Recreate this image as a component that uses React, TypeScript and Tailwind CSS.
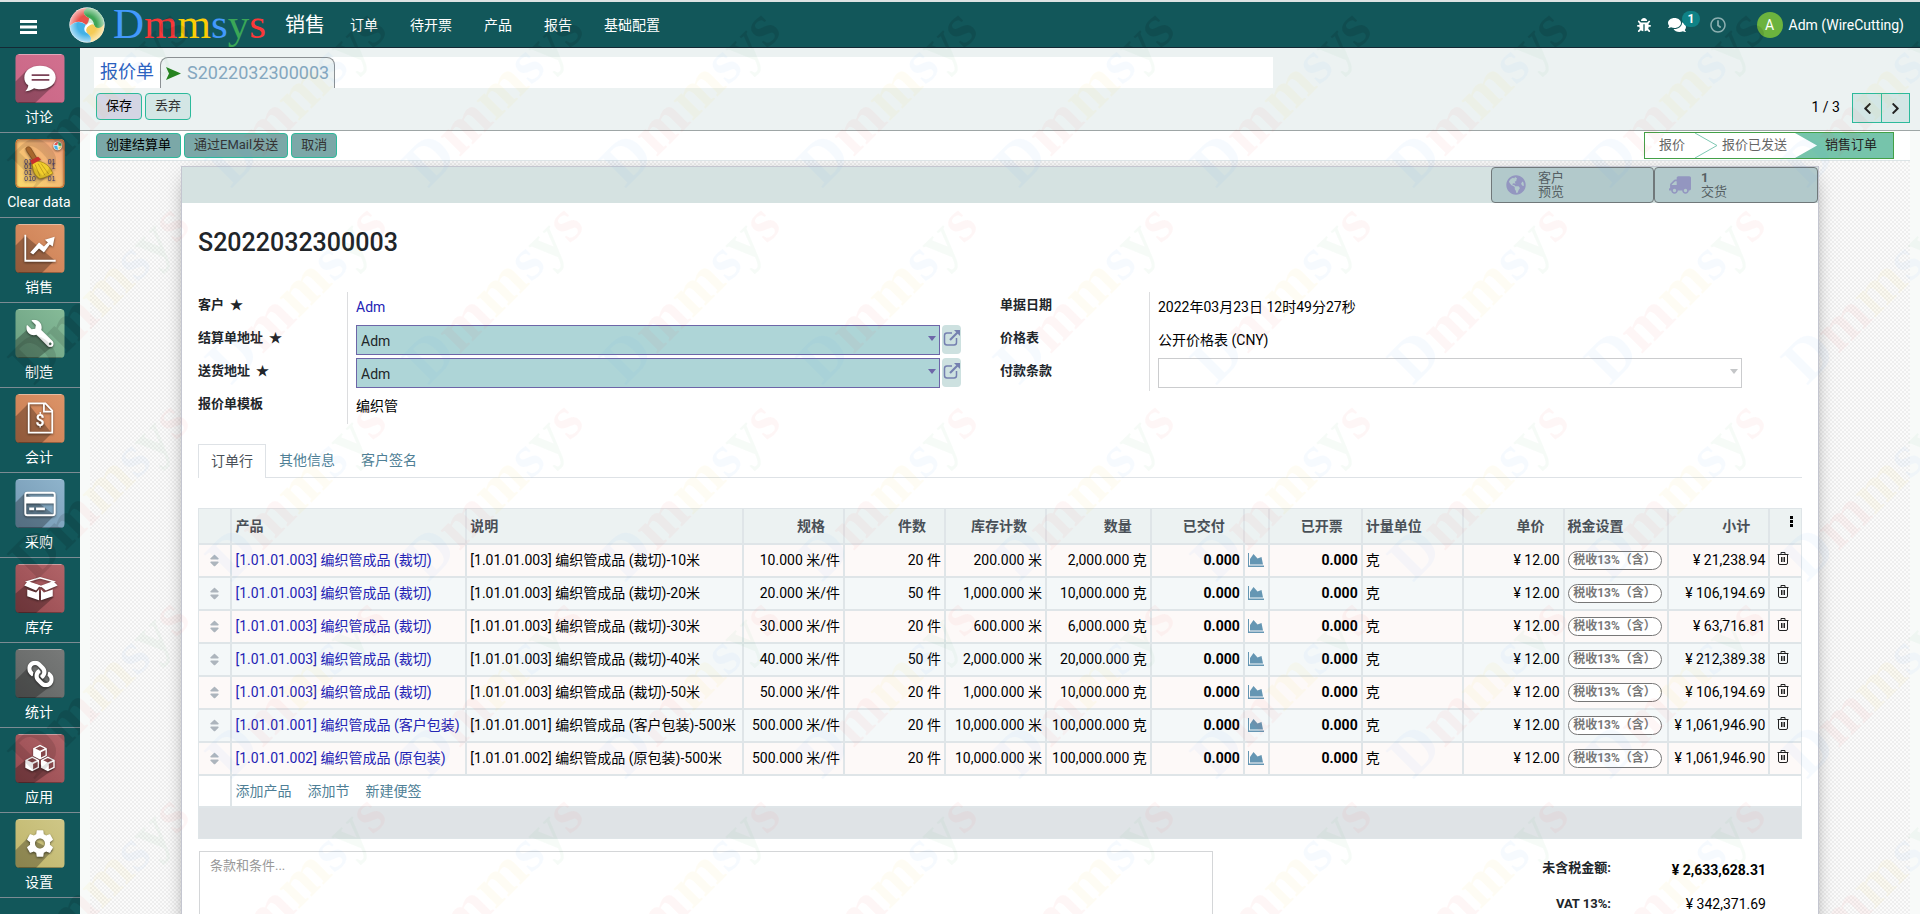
import type { ReactNode } from 'react';
import { FaBug, FaChevronLeft, FaChevronRight, FaComments, FaGlobeAmericas, FaLink, FaRegClock, FaSort, FaTruck, FaWrench } from 'react-icons/fa';
import { MdSettings } from 'react-icons/md';

const brandLetters = [
  { char: 'D', color: '#4399fd' },
  { char: 'm', color: '#fb3838' },
  { char: 'm', color: '#fccd05' },
  { char: 's', color: '#4399fd' },
  { char: 'y', color: '#3aa757' },
  { char: 's', color: '#fb3838' },
];

const menus = ['订单', '待开票', '产品', '报告', '基础配置'];

const orderLines = [
  { code: '1.01.01.003', kind: '裁切', length: '10', spec: '10.000', pieces: 20, stock: '200.000', qty: '2,000.000', subtotal: '21,238.94' },
  { code: '1.01.01.003', kind: '裁切', length: '20', spec: '20.000', pieces: 50, stock: '1,000.000', qty: '10,000.000', subtotal: '106,194.69' },
  { code: '1.01.01.003', kind: '裁切', length: '30', spec: '30.000', pieces: 20, stock: '600.000', qty: '6,000.000', subtotal: '63,716.81' },
  { code: '1.01.01.003', kind: '裁切', length: '40', spec: '40.000', pieces: 50, stock: '2,000.000', qty: '20,000.000', subtotal: '212,389.38' },
  { code: '1.01.01.003', kind: '裁切', length: '50', spec: '50.000', pieces: 20, stock: '1,000.000', qty: '10,000.000', subtotal: '106,194.69' },
  { code: '1.01.01.001', kind: '客户包装', length: '500', spec: '500.000', pieces: 20, stock: '10,000.000', qty: '100,000.000', subtotal: '1,061,946.90' },
  { code: '1.01.01.002', kind: '原包装', length: '500', spec: '500.000', pieces: 20, stock: '10,000.000', qty: '100,000.000', subtotal: '1,061,946.90' },
];

const columns = [
  { label: '', width: 33 },
  { label: '产品', width: 235 },
  { label: '说明', width: 277 },
  { label: '规格', width: 101, numeric: true },
  { label: '件数', width: 101, numeric: true },
  { label: '库存计数', width: 101, numeric: true },
  { label: '数量', width: 105, numeric: true },
  { label: '已交付', width: 93, numeric: true },
  { label: '', width: 25 },
  { label: '已开票', width: 93, numeric: true },
  { label: '计量单位', width: 101 },
  { label: '单价', width: 101, numeric: true },
  { label: '税金设置', width: 105 },
  { label: '小计', width: 101, numeric: true },
];

const tableWidth = 1604;

function Watermark({ id, dark = false }: { id: string; dark?: boolean }) {
  return (
    <svg
      aria-hidden="true"
      className={`pointer-events-none absolute inset-0 h-full w-full select-none ${dark ? 'opacity-10' : 'opacity-[0.04]'}`}
    >
      <defs>
        <pattern id={id} width="197" height="197" patternUnits="userSpaceOnUse">
          <text transform="translate(34 189) rotate(-45)" fontFamily="Liberation Serif, serif" fontWeight="bold" fontSize="61">
            {brandLetters.map((letter, i) => (
              <tspan key={i} fill={dark ? '#000' : letter.color}>
                {letter.char}
              </tspan>
            ))}
          </text>
        </pattern>
      </defs>
      <rect width="100%" height="100%" fill={`url(#${id})`} />
    </svg>
  );
}

function BrandMark() {
  return (
    <svg viewBox="0 0 36 36" className="size-9">
      <defs>
        <radialGradient id="brand-shade" cx="0.5" cy="0.5" r="0.5">
          <stop offset="0.55" stopColor="#fff" stopOpacity="0" />
          <stop offset="1" stopColor="#fff" stopOpacity="0.6" />
        </radialGradient>
      </defs>
      <circle cx="18" cy="18" r="17.5" fill="#fff" />
      <path d="M1 19C0 9 8 0 19 1c-6 3-5 7 1 10 1 3 0 6-3 7-5-5-11-4-16 1z" fill="#e8524b" />
      <path d="M18 1c10-1 18 8 17 18-3 5-8 4-10-1-2-3-5-3-8 0 3-3 3-5 3-7-6-3-7-7-2-10z" fill="#3fa557" />
      <path d="M35 17c1 10-6 18-16 18 4-3 3-6-1-9-2-3-1-6 3-8 2-1 3-1 4 0 2 4 7 4 10-1z" fill="#f5cb57" />
      <path d="M21 35C10 36 1 29 1 19c5-5 11-5 16-1-2 3-1 6 1 8 4 3 5 6 3 9z" fill="#43b1e6" />
      <path d="M20 11c3 1 5 4 5 7-2-2-3-1-4 0-3 2-5 4-3 8-3-1-4-5-1-8 2-2 3-4 3-7z" fill="#fff" opacity="0.8" />
      <circle cx="18" cy="18" r="17.5" fill="url(#brand-shade)" />
    </svg>
  );
}

function AppTile({ id, from, to, shadow, children }: { id: string; from: string; to: string; shadow?: string; children: ReactNode }) {
  return (
    <svg viewBox="0 0 50 50" className="size-[50px] rounded">
      <defs>
        <linearGradient id={id} x1="1" y1="0" x2="0" y2="1">
          <stop offset="0" stopColor={from} />
          <stop offset="1" stopColor={to} />
        </linearGradient>
      </defs>
      <rect width="50" height="50" rx="4" fill={`url(#${id})`} />
      {shadow && <path d={shadow} fill="#000" opacity="0.27" />}
      <path d="M3 .5h44" stroke="#fff" opacity="0.4" />
      <path d="M3 49.5h44" stroke="#000" opacity="0.3" />
      <g className="drop-shadow-[0_1px_1px_rgba(0,0,0,0.55)]">{children}</g>
    </svg>
  );
}

function Cube({ x, y }: { x: number; y: number }) {
  return (
    <g transform={`translate(${x} ${y})`}>
      <path d="M0 3.5 7 0l7 3.5v8L7 15 0 11.5z" fill="#fff" />
      <path d="M2.2 3.8 7 1.6l4.8 2.2L7 6z" fill="#86484b" />
      <path d="M8 7.6l4.6-2.2v5.2L8 13z" fill="#86484b" />
    </g>
  );
}

const apps = [
  {
    name: '讨论',
    icon: (
      <AppTile id="tile-talk" from="#d2708f" to="#c96685" shadow="M11 17 0 28v22h20l20-19z">
        <path d="M25 12c9 0 16 5 16 12s-7 12-16 12c-2 0-4 0-6-1-3 2-6 3-9 3 2-2 3-4 3-6-3-2-4-5-4-8 0-7 7-12 16-12z" fill="#fff" />
        <path d="M16.500 21.500h18M16.500 26.500h18" stroke="#7b4257" strokeWidth="1.800" />
      </AppTile>
    ),
  },
  {
    name: 'Clear data',
    icon: (
      <AppTile id="tile-clear" from="#ef9c7c" to="#fbdc6c">
        <rect x=".5" y=".5" width="49" height="49" rx="4" fill="none" stroke="#c96b2c" />
        <g fill="#3b3570" fontFamily="Liberation Sans, sans-serif" fontSize="7">
          <text x="9" y="25">01</text>
          <text x="33" y="25">01</text>
          <text x="9" y="31">01</text>
          <text x="37" y="31">1</text>
          <text x="9" y="37">01</text>
          <text x="9" y="43">010</text>
          <text x="33" y="43">01</text>
        </g>
        <path d="M11 9c2-2 4-1 5 1l6 10-4 2-6-9c-1-2-2-3-1-4z" fill="#a8672c" stroke="#6f3f14" strokeWidth=".6" />
        <path d="M17 22c8 1 16 1 21 13-5 3-11 6-14 5-6-4-7-11-7-18z" fill="#f2cf2c" stroke="#a58312" strokeWidth=".7" />
        <path d="m20 26 5 12M23 25l7 12M26 25l8 11" stroke="#b8951a" strokeWidth=".8" />
        <path d="m15 22 8-4 3 3-9 5z" fill="#c8302c" />
        <circle cx="43" cy="7" r="4.500" fill="#e9f1f3" />
        <path d="M39.500 6a4 4 0 0 1 4-3l-1 3z" fill="#e8524b" />
        <path d="M43.500 3a4 4 0 0 1 3.500 4h-3z" fill="#3fa557" />
        <path d="M39.500 7a4 4 0 0 0 4 4l-1-4z" fill="#43b1e6" />
        <path d="M47 7.500a4 4 0 0 1-3 3.500v-3z" fill="#f5cb57" />
      </AppTile>
    ),
  },
  {
    name: '销售',
    icon: (
      <AppTile id="tile-sales" from="#dc9468" to="#c97c51" shadow="M10 12 0 22v28h27l13-13z">
        <path d="M10 11v26.500h31" fill="none" stroke="#fff" strokeWidth="1.800" />
        <path d="m15 29 9-10 5 4 4-4-3-3 10-3-2 10-3-2-6 8-5-4-6 6z" fill="#fff" />
      </AppTile>
    ),
  },
  {
    name: '制造',
    icon: (
      <AppTile id="tile-make" from="#86bb98" to="#6a9e80" shadow="M12 21 0 32v18h23l15-12z">
        <g transform="translate(50 0) scale(-1 1)">
          <FaWrench x={11} y={11} size={28} color="#fff" />
        </g>
      </AppTile>
    ),
  },
  {
    name: '会计',
    icon: (
      <AppTile id="tile-account" from="#dc9468" to="#c97c51" shadow="M13 10 0 23v27h27l10-10z">
        <path d="M13.500 9.500h17l7 7.500v22.500h-24z" fill="none" stroke="#fff" strokeWidth="1.800" />
        <path d="M29 9.500V18h8.500" fill="none" stroke="#fff" strokeWidth="1.800" />
        <text x="25" y="33" textAnchor="middle" fontFamily="Roboto, sans-serif" fontWeight="bold" fontSize="16" fill="#fff">
          $
        </text>
      </AppTile>
    ),
  },
  {
    name: '采购',
    icon: (
      <AppTile id="tile-buy" from="#8fb4cc" to="#7397b2" shadow="M10 14 0 24v26h27l13-13z">
        <rect x="10" y="14" width="30" height="23" rx="2" fill="none" stroke="#fff" strokeWidth="2" />
        <path d="M10 18h30v7H10zM14 29h5v3h-5zM21 29h9v3h-9z" fill="#fff" />
      </AppTile>
    ),
  },
  {
    name: '库存',
    icon: (
      <AppTile id="tile-stock" from="#b16468" to="#96494f" shadow="M11 21 0 30v20h21l18-16z">
        <path d="m12 18 13-4 14 4-13 5z" fill="none" stroke="#fff" strokeWidth="1.500" />
        <path d="m12 18 13 4-4 5-12-5zM39 18l4 4-12 5-5-4zM12 26l9 3 3-3v11l-12-4zM38 26l-9 3-3-3v11l12-4z" fill="#fff" />
      </AppTile>
    ),
  },
  {
    name: '统计',
    icon: (
      <AppTile id="tile-stats" from="#787a79" to="#626463" shadow="M13 19 0 32v18h20l17-13z">
        <g transform="translate(50 0) scale(-1 1)">
          <FaLink x={11} y={12} size={27} color="#fff" />
        </g>
      </AppTile>
    ),
  },
  {
    name: '应用',
    icon: (
      <AppTile id="tile-apps" from="#b16468" to="#96494f" shadow="M11 26 0 35v15h19l20-14z">
        <Cube x={18} y={11} />
        <Cube x={10} y={23} />
        <Cube x={26} y={23} />
      </AppTile>
    ),
  },
  {
    name: '设置',
    icon: (
      <AppTile id="tile-settings" from="#cfc787" to="#bfb56a" shadow="M13 19 0 32v18h21l17-18z">
        <MdSettings x={8} y={8} size={34} color="#fff" />
      </AppTile>
    ),
  },
];

function ExternalLinkIcon() {
  return (
    <svg viewBox="0 0 18 18" className="size-[18px]" fill="none" stroke="#7580b0">
      <path d="M9 4H4a2.500 2.500 0 0 0-2.500 2.500v7A2.500 2.500 0 0 0 4 16h7a2.500 2.500 0 0 0 2.500-2.500V9" strokeWidth="1.500" />
      <path d="m7 11 8-8" strokeWidth="2.200" />
      <path d="M11 1h6v6z" fill="#7580b0" stroke="none" />
    </svg>
  );
}

function AreaChartIcon() {
  return (
    <svg viewBox="0 0 16 14" className="h-3.5 w-4" fill="#6596b3">
      <path d="M0 0h1v12.500h15v1.500H0z" />
      <path d="M2 11.500V6l3.500-5 4 4.500L13.500 4l1.500 7.500z" />
    </svg>
  );
}

function TrashIcon() {
  return (
    <svg viewBox="0 0 12 13" className="h-[13px] w-3" fill="none" stroke="#222">
      <path d="M.5 2.500h11M4 2.500v-2h4v2M1.500 2.500V11q0 1.500 1.500 1.500h6q1.500 0 1.500-1.500V2.500M4.500 5v5M6 5v5M7.500 5v5" />
    </svg>
  );
}

function Field({ id, label, required = false, children }: { id?: string; label: string; required?: boolean; children: ReactNode }) {
  return (
    <div className="flex h-[33px]">
      <label htmlFor={id} className="w-[149px] shrink-0 text-[13px] leading-[26px] font-bold text-[#212529]">
        {label}
        {required && <span className="ml-1.5">★</span>}
      </label>
      <div className="flex h-full flex-1 border-l border-[#dcdddf] pl-2 leading-[30px]">{children}</div>
    </div>
  );
}

function PartnerSelect({ id, label }: { id: string; label: string }) {
  return (
    <div className="flex flex-1 gap-0.5">
      <div className="relative h-[30px] w-[584px]">
        <select id={id} className="block h-full w-full appearance-none border border-[#6d66a8] bg-[#aed5d7] px-1 pb-0.5 text-[#212529]">
          <option>Adm</option>
        </select>
        <span className="pointer-events-none absolute top-[11px] right-1 border-x-4 border-t-[5px] border-x-transparent border-t-[#6d66a8]" />
      </div>
      <button aria-label={`打开${label}`} className="flex h-[29px] w-[19px] items-start justify-center rounded bg-[#cde1e0] pt-1">
        <ExternalLinkIcon />
      </button>
    </div>
  );
}

function Header() {
  return (
    <header className="relative z-10 flex h-12 shrink-0 items-center border-t-2 border-b border-t-[#dde3e3] border-b-[#142a35] bg-[#12575a] pr-4 pl-5 text-white">
      <button aria-label="菜单">
        <svg viewBox="0 0 17 14" className="mt-1 h-3.5 w-[17px]" fill="#fff">
          <path d="M0 0h17v3H0zM0 5.500h17v3H0zM0 11h17v3H0z" />
        </svg>
      </button>
      <a href="#" className="ml-8 flex items-center gap-2">
        <BrandMark />
        <span className="-mt-0.5 font-['Liberation_Serif',serif] text-[43px] leading-[44px]">
          {brandLetters.map((letter, i) => (
            <span key={i} style={{ color: letter.color }}>
              {letter.char}
            </span>
          ))}
        </span>
      </a>
      <a href="#" className="ml-[19px] text-xl">
        销售
      </a>
      <nav className="ml-[25px] flex gap-8">
        {menus.map((menu) => (
          <a key={menu} href="#">
            {menu}
          </a>
        ))}
      </nav>
      <div className="ml-auto flex items-center">
        <button aria-label="调试">
          <FaBug size={14} />
        </button>
        <button aria-label="消息" className="relative ml-[17px]">
          <FaComments size={18} />
          <span className="absolute -top-[5px] left-3.5 rounded-full bg-[#0f8286] px-1.5 text-xs leading-4 font-bold">1</span>
        </button>
        <button aria-label="活动" className="ml-6 text-[#8db0b1]">
          <FaRegClock size={16} />
        </button>
        <button className="ml-[31px] flex items-center gap-1.5">
          <span className="flex size-[26px] items-center justify-center rounded-full bg-[#6cb33e]">A</span>
          Adm (WireCutting)
        </button>
      </div>
      <Watermark id="mark-header" dark />
    </header>
  );
}

function Sidebar() {
  return (
    <aside className="relative z-10 w-20 shrink-0 overflow-hidden bg-[#12575a] text-white">
      {apps.map((app) => (
        <a key={app.name} href="#" className="flex h-[85px] flex-col items-center border-b border-[#7c8b93] pt-1.5">
          {app.icon}
          <span className="pr-0.5 leading-[29px] whitespace-nowrap">{app.name}</span>
        </a>
      ))}
      {/* shifted up by the header so that the tiles line up with the page */}
      <div className="pointer-events-none absolute inset-x-0 -top-12 bottom-0">
        <Watermark id="mark-side" dark />
      </div>
    </aside>
  );
}

function ControlPanel() {
  const pagerButton = 'flex h-[30px] items-center justify-center border border-[#2cba9b] bg-[#d3e6e5] text-[#222]';

  return (
    <div className="h-[83px] shrink-0 border-b border-[#9ea6a6] bg-[#ecf2f2] pt-[9px] pr-2.5 pl-3.5">
      <nav className="flex h-[31px] w-[1179px] bg-white text-lg leading-[29px]">
        <a href="#" className="px-1.5 text-[#2b61bf]">
          报价单
        </a>
        <span className="flex gap-1.5 rounded-t-lg border border-b-0 border-[#8b9093] bg-[#ecf2f2] px-[5px] text-[#84a7bf]">
          <svg viewBox="0 0 15 13" className="h-[13px] w-[15px] self-center" fill="#26831f">
            <path d="m0 0 15 6.500L0 13l3-6.500z" />
          </svg>
          S2022032300003
        </span>
      </nav>
      <div className="flex justify-between pt-[5px] pl-0.5">
        <div className="flex gap-[3px] text-[13px]">
          <button className="h-[27px] rounded border border-[#2cba9b] bg-[#d4d5e4] px-[9px] text-black">保存</button>
          <button className="h-[27px] rounded border border-[#2cba9b] bg-[#d3e6e5] px-[9px] text-[#333]">丢弃</button>
        </div>
        <div className="flex">
          <span className="mr-3 leading-7">1 / 3</span>
          <button aria-label="上一个" className={`${pagerButton} w-[30px]`}>
            <FaChevronLeft size={13} />
          </button>
          <button aria-label="下一个" className={`${pagerButton} w-7 border-l-0`}>
            <FaChevronRight size={13} />
          </button>
        </div>
      </div>
    </div>
  );
}

function StatusBar() {
  const action = 'h-[25px] rounded border border-[#2cba9b] bg-[#7ba8a8] px-[9px] text-[13px]';

  return (
    <div className="flex h-[30px] shrink-0 justify-between border-b border-[#dce4e6] bg-white pr-4 pl-1.5 text-[13px]">
      <div className="flex items-center gap-[3px]">
        <button className={`${action} text-black`}>创建结算单</button>
        <button className={`${action} text-[#333]`}>通过EMail发送</button>
        <button className={`${action} text-[#333]`}>取消</button>
      </div>
      <div className="mt-px flex h-[27px] items-stretch border border-[#43a047] text-[#666]">
        <button className="pr-2.5 pl-3.5">报价</button>
        <svg viewBox="0 0 23 25" className="h-full w-[23px]" fill="none" stroke="#7fc8b4">
          <path d="m0 0 22 12.500L0 25" />
        </svg>
        <button className="pr-2 pl-1">报价已发送</button>
        <svg viewBox="0 0 22 25" className="h-full w-[22px]">
          <path d="M0 0h22v25H0l22-12.500z" fill="#76c4ab" />
        </svg>
        <button className="bg-[#76c4ab] pr-4 pl-2 text-[#222]">销售订单</button>
      </div>
    </div>
  );
}

function OrderTable() {
  const cell = 'border-r-2 border-b-2 border-[#dfe5e8] px-[3px] last:border-r';

  return (
    <table className="mt-[30px] w-full table-fixed border-collapse border border-[#dfe5e8] text-left whitespace-nowrap">
      <colgroup>
        {columns.map((column, i) => (
          <col key={i} style={{ width: `${(column.width / tableWidth) * 100}%` }} />
        ))}
        <col />
      </colgroup>
      <thead>
        <tr className="h-[35px] bg-[#ecf2f2] leading-5 text-[#495057]">
          {columns.map((column, i) => (
            <th key={i} className={`${cell} ${column.numeric ? 'pr-[18px] text-right' : ''}`}>
              {column.label}
            </th>
          ))}
          <th className={cell}>
            <button aria-label="可选列" className="-mt-2 ml-auto flex w-2 flex-col gap-px">
              <i className="size-[3px] bg-black" />
              <i className="size-[3px] bg-black" />
              <i className="size-[3px] bg-black" />
            </button>
          </th>
        </tr>
      </thead>
      <tbody>
        {orderLines.map((line, i) => (
          <tr key={i} className="h-[33px] leading-5 odd:bg-[#fdf9f8] even:bg-[#f4f8f9]">
            <td className={cell}>
              <FaSort size={15} className="mx-auto text-[#adb5bd]" />
            </td>
            <td className={cell}>
              <a href="#" className="text-[#2323b4]">
                [{line.code}] 编织管成品 ({line.kind})
              </a>
            </td>
            <td className={cell}>
              [{line.code}] 编织管成品 ({line.kind})-{line.length}米
            </td>
            <td className={`${cell} text-right`}>{line.spec} 米/件</td>
            <td className={`${cell} text-right`}>{line.pieces} 件</td>
            <td className={`${cell} text-right`}>{line.stock} 米</td>
            <td className={`${cell} text-right`}>{line.qty} 克</td>
            <td className={`${cell} text-right font-bold`}>0.000</td>
            <td className={cell}>
              <button aria-label="预测" className="block">
                <AreaChartIcon />
              </button>
            </td>
            <td className={`${cell} text-right font-bold`}>0.000</td>
            <td className={cell}>克</td>
            <td className={`${cell} text-right`}>¥ 12.00</td>
            <td className={cell}>
              <span className="block w-[94px] rounded-full border border-[#777] bg-white text-center text-xs leading-[17px] font-bold text-[#777]">
                税收13%（含）
              </span>
            </td>
            <td className={`${cell} text-right`}>¥ {line.subtotal}</td>
            <td className={cell}>
              <button aria-label="删除" className="mb-1 ml-1 block">
                <TrashIcon />
              </button>
            </td>
          </tr>
        ))}
        <tr className="h-8 leading-5">
          <td className={cell} />
          <td colSpan={14} className={cell}>
            <div className="flex gap-4 text-[#4f7f96]">
              <a href="#">添加产品</a>
              <a href="#">添加节</a>
              <a href="#">新建便签</a>
            </div>
          </td>
        </tr>
      </tbody>
      <tfoot>
        <tr className="h-8 bg-[#dfe3e6]">
          <td colSpan={15} />
        </tr>
      </tfoot>
    </table>
  );
}

function OrderSheet() {
  return (
    <section className="mx-[91px] mt-[5px] border border-b-0 border-[#c4c6d0] bg-white shadow-[0_5px_20px_-8px_rgba(0,0,0,0.6)]">
      <div className="flex h-9 justify-end bg-[#d5e2e1] text-[13px] leading-[14px] text-[#555f63]">
        <button className="flex w-[163px] items-center gap-3 rounded border border-[#70787a] bg-[#b2c9cb] pl-3.5 text-left">
          <FaGlobeAmericas size={20} color="#9396c0" />
          <span>
            客户
            <br />
            预览
          </span>
        </button>
        <button className="flex w-[164px] items-center gap-2.5 rounded border border-[#70787a] bg-[#b2c9cb] pl-3.5 text-left">
          <FaTruck size={22} color="#9396c0" className="-scale-x-100" />
          <span>
            <b>1</b>
            <br />
            交货
          </span>
        </button>
      </div>

      <div className="px-4">
        <h1 className="pt-6 text-[25px] leading-8 font-medium text-[#212529]">S2022032300003</h1>

        <div className="grid grid-cols-2 pt-[33px]">
          <div>
            <Field label="客户" required>
              <a href="#" className="text-[#2323b4]">
                Adm
              </a>
            </Field>
            <Field id="invoice-address" label="结算单地址" required>
              <PartnerSelect id="invoice-address" label="结算单地址" />
            </Field>
            <Field id="delivery-address" label="送货地址" required>
              <PartnerSelect id="delivery-address" label="送货地址" />
            </Field>
            <Field label="报价单模板">编织管</Field>
          </div>
          <div>
            <Field label="单据日期">2022年03月23日 12时49分27秒</Field>
            <Field label="价格表">公开价格表 (CNY)</Field>
            <Field id="payment-term" label="付款条款">
              <div className="relative h-[30px] w-[584px]">
                <select id="payment-term" className="block h-full w-full appearance-none border border-[#cbccce] px-1">
                  <option />
                </select>
                <span className="pointer-events-none absolute top-[11px] right-1 border-x-4 border-t-[5px] border-x-transparent border-t-[#c4c6c8]" />
              </div>
            </Field>
          </div>
        </div>

        <div role="tablist" className="mt-5 flex h-[34px] border-b border-[#dee2e6] leading-[30px] text-[#4f7f96]">
          <button role="tab" aria-selected="true" className="-mb-px border border-b-0 border-[#dee2e6] bg-white px-3 pb-0.5 text-[#495057]">
            订单行
          </button>
          <button role="tab" aria-selected="false" className="px-[13px] pb-0.5">
            其他信息
          </button>
          <button role="tab" aria-selected="false" className="px-[13px] pb-0.5">
            客户签名
          </button>
        </div>

        <OrderTable />

        <div className="flex items-start justify-between pt-3">
          <textarea
            aria-label="条款和条件"
            placeholder="条款和条件..."
            className="ml-px block h-[120px] w-[1014px] resize-none border border-[#d4d6d8] px-2.5 py-1 text-[13px] leading-5 placeholder:text-[#999]"
          />
          <dl className="mr-9 grid grid-cols-[auto_155px] text-right leading-[34px]">
            <dt className="text-[13px] font-bold text-[#212529]">未含税金额:</dt>
            <dd className="pt-0.5 font-bold">¥ 2,633,628.31</dd>
            <dt className="text-[13px] font-bold text-[#212529]">VAT 13%:</dt>
            <dd>¥ 342,371.69</dd>
          </dl>
        </div>
      </div>
    </section>
  );
}

export default function App() {
  return (
    <div className="relative flex h-screen flex-col overflow-hidden bg-[#f8faf9] font-['Roboto','Noto_Sans_CJK_SC',sans-serif] text-sm text-black">
      <Header />
      <div className="flex min-h-0 flex-1">
        <Sidebar />
        <main className="flex min-w-0 flex-1 flex-col">
          <ControlPanel />
          <div className="mx-2.5 flex min-h-0 flex-1 flex-col">
            <StatusBar />
            <div className="min-h-0 flex-1 overflow-hidden bg-[repeating-conic-gradient(#eeeeee_0_25%,#fbfbfb_0_50%)] bg-[length:4px_4px]">
              <OrderSheet />
            </div>
          </div>
        </main>
      </div>
      <Watermark id="mark-page" />
    </div>
  );
}
